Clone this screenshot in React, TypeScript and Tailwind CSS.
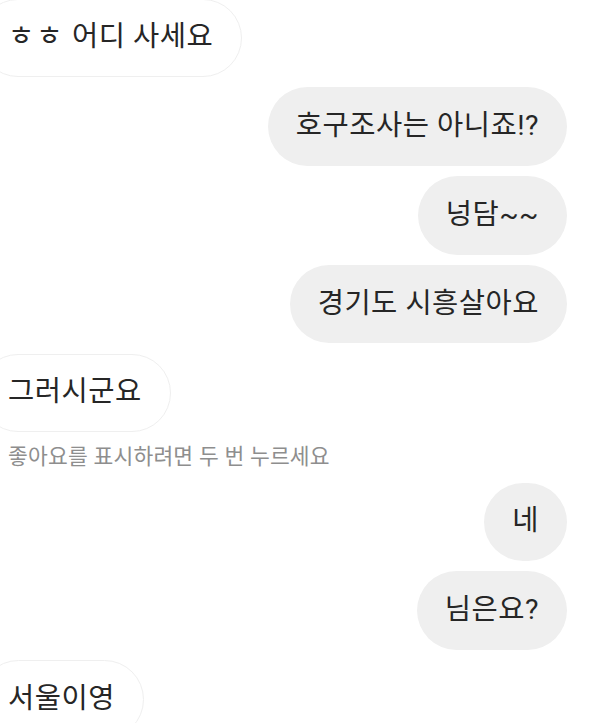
const font = { fontFamily: 'Roboto, "Noto Sans CJK KR", "Noto Sans", sans-serif' };

const Theirs = ({ children }: { children: React.ReactNode }) => (
    <div className="flex justify-start">
        <div className="-ml-[21px] h-[78.5px] px-7 flex items-center rounded-full border border-[#efefef] bg-white text-[28.5px] tracking-[0.5px] text-[#262626] whitespace-nowrap">
            <span>{children}</span>
        </div>
    </div>
);

const Mine = ({ children }: { children: React.ReactNode }) => (
    <div className="flex justify-end">
        <div className="h-[78.5px] px-7 flex items-center rounded-full bg-[#efefef] text-[28.5px] tracking-[0.5px] text-[#262626] whitespace-nowrap">
            <span>{children}</span>
        </div>
    </div>
);

export default function App() {
    return (
        <div className="w-[592px] h-[723px] overflow-hidden bg-white" style={font}>
            <div className="flex flex-col pr-[25px] -mt-[1.5px]">
                <div className="flex flex-col gap-[10.25px]">
                    <Theirs>
                        <span className="tracking-[2px]">ㅎㅎ</span> 어디 사세요
                    </Theirs>
                    <Mine>호구조사는 아니죠!?</Mine>
                    <Mine>넝담~~</Mine>
                    <Mine>경기도 시흥살아요</Mine>
                    <Theirs>그러시군요</Theirs>
                </div>
                <div className="h-[50.5px] flex items-center pl-2 text-[21.5px] tracking-[0.2px] text-[#8e8e8e] whitespace-nowrap">
                    좋아요를 표시하려면 두 번 누르세요
                </div>
                <div className="flex flex-col gap-[10.25px]">
                    <Mine>네</Mine>
                    <Mine>님은요?</Mine>
                    <Theirs>서울이영</Theirs>
                </div>
            </div>
        </div>
    );
}
